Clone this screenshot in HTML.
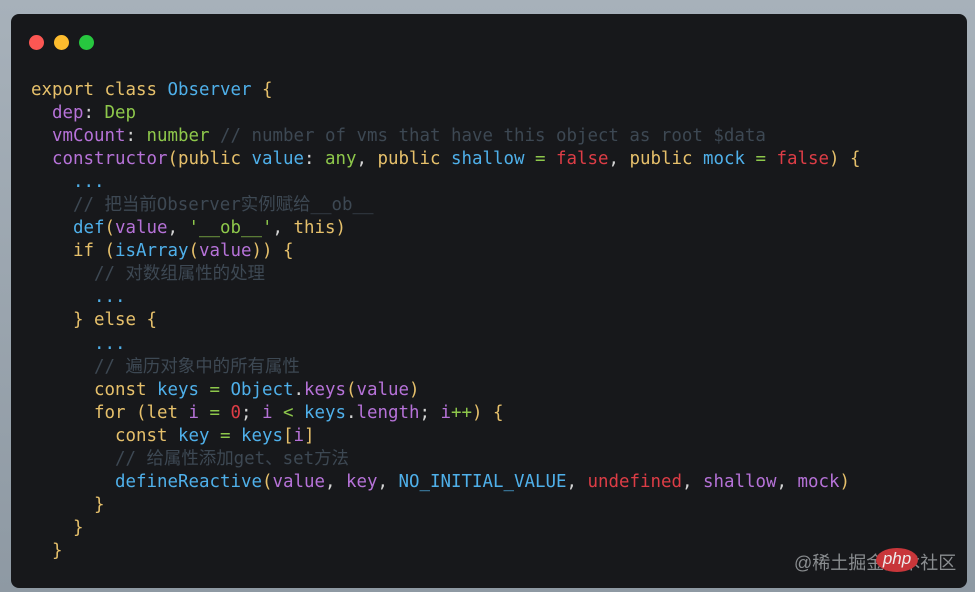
<!DOCTYPE html>
<html><head><meta charset="utf-8"><style>
html,body{margin:0;padding:0;width:975px;height:592px;overflow:hidden;background:linear-gradient(180deg,#a7b1ba,#8e99a3);}
.win{position:absolute;left:11px;top:14px;width:956px;height:574px;background:#17181b;border-radius:8px;}
.dot{position:absolute;top:21px;width:15px;height:15px;border-radius:50%;}
pre{position:absolute;left:20px;top:65px;margin:0;font-family:"DejaVu Sans Mono","Noto Sans CJK SC",monospace;font-size:17.45px;line-height:23.05px;color:#d4d4d4;}
.k{color:#e6c06b}.b{color:#4fb0ea}.p{color:#b672d8}.g{color:#8ec84b}.r{color:#dd3d46}.c{color:#3d4853}.w{color:#cfcfcf}
.wm{position:absolute;left:794px;top:549px;font-family:"Liberation Sans","Noto Sans CJK SC",sans-serif;font-size:18px;color:#8a8d90;}
.php{position:absolute;left:876px;top:548px;width:42px;height:24px;border-radius:50%;background:#c8363a;color:#eee;font:italic 17px "Liberation Sans",sans-serif;text-align:center;line-height:22px;}
</style></head><body>
<div class="win">
<div class="dot" style="left:18px;background:#fc5753"></div>
<div class="dot" style="left:43px;background:#fdbc2e"></div>
<div class="dot" style="left:68px;background:#27c73f"></div>
<pre><span class="k">export class</span> <span class="b">Observer</span> <span class="k">{</span>
  <span class="p">dep</span>: <span class="g">Dep</span>
  <span class="p">vmCount</span>: <span class="g">number</span> <span class="c">// number of vms that have this object as root $data</span>
  <span class="p">constructor</span><span class="k">(public</span> <span class="b">value</span>: <span class="g">any</span>, <span class="k">public</span> <span class="b">shallow</span> <span class="g">=</span> <span class="r">false</span>, <span class="k">public</span> <span class="b">mock</span> <span class="g">=</span> <span class="r">false</span><span class="k">)</span> <span class="k">{</span>
    <span class="b">...</span>
    <span class="c">// 把当前Observer实例赋给__ob__</span>
    <span class="b">def</span><span class="k">(</span><span class="p">value</span>, <span class="g">'__ob__'</span>, <span class="k">this)</span>
    <span class="k">if (</span><span class="b">isArray</span><span class="k">(</span><span class="p">value</span><span class="k">)) {</span>
      <span class="c">// 对数组属性的处理</span>
      <span class="b">...</span>
    <span class="k">} else {</span>
      <span class="b">...</span>
      <span class="c">// 遍历对象中的所有属性</span>
      <span class="k">const</span> <span class="b">keys</span> <span class="g">=</span> <span class="b">Object</span>.<span class="p">keys</span><span class="k">(</span><span class="p">value</span><span class="k">)</span>
      <span class="k">for (let</span> <span class="p">i</span> <span class="g">=</span> <span class="r">0</span>; <span class="p">i</span> <span class="g">&lt;</span> <span class="b">keys</span>.<span class="p">length</span>; <span class="p">i</span><span class="g">++</span><span class="k">) {</span>
        <span class="k">const</span> <span class="b">key</span> <span class="g">=</span> <span class="b">keys</span><span class="k">[</span><span class="p">i</span><span class="k">]</span>
        <span class="c">// 给属性添加get、set方法</span>
        <span class="b">defineReactive</span><span class="k">(</span><span class="p">value</span>, <span class="p">key</span>, <span class="b">NO_INITIAL_VALUE</span>, <span class="r">undefined</span>, <span class="p">shallow</span>, <span class="p">mock</span><span class="k">)</span>
      <span class="k">}</span>
    <span class="k">}</span>
  <span class="k">}</span></pre>
</div>
<div class="wm">@稀土掘金技术社区</div>
<div class="php">php</div>
</body></html>
